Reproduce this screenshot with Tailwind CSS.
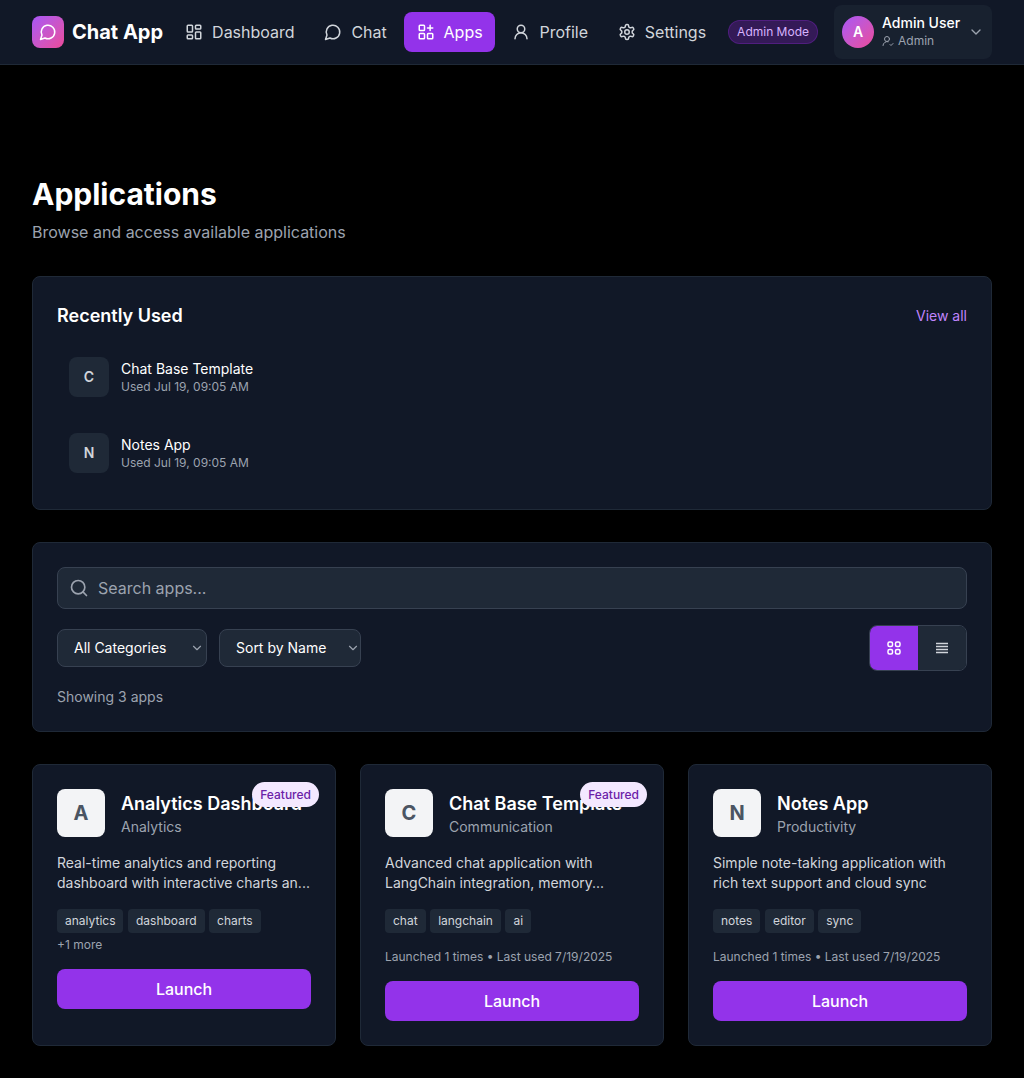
<!DOCTYPE html>
<html lang="en">
<head>
  <meta charset="UTF-8" />
  <title>Chat App - Applications</title>
  <script src="https://cdn.jsdelivr.net/npm/@tailwindcss/browser@4"></script>
</head>
<body class="bg-black min-h-screen font-['Inter',sans-serif] text-white">
  <!-- Top nav -->
  <nav class="h-[65px] bg-[#111827] border-b border-[#1f2937] pl-8 pr-8 flex items-center justify-between">
    <div class="flex items-center">
      <div class="flex items-center gap-2 mr-[9px]">
        <div class="w-8 h-8 rounded-lg bg-gradient-to-br from-[#a855f7] to-[#ec4899] flex items-center justify-center">
          <svg class="w-[18px] h-[18px]" viewBox="0 0 24 24" fill="none" stroke="currentColor" stroke-width="2" stroke-linecap="round" stroke-linejoin="round"><path d="M7.9 20A9 9 0 1 0 4 16.1L2 22Z"/></svg>
        </div>
        <span class="text-xl font-bold">Chat App</span>
      </div>
      <div class="flex items-center gap-[4.8px]">
        <a class="h-10 pl-[13px] pr-3 flex items-center gap-[9px] rounded-lg text-[#d1d5db]">
          <svg class="w-[18px] h-[18px]" viewBox="0 0 24 24" fill="none" stroke="currentColor" stroke-width="2" stroke-linecap="round" stroke-linejoin="round"><rect x="3" y="3" width="7" height="9" rx="1"/><rect x="14" y="3" width="7" height="5" rx="1"/><rect x="14" y="12" width="7" height="9" rx="1"/><rect x="3" y="16" width="7" height="5" rx="1"/></svg>
          Dashboard
        </a>
        <a class="h-10 pl-[13px] pr-3 flex items-center gap-[9px] rounded-lg text-[#d1d5db]">
          <svg class="w-[18px] h-[18px]" viewBox="0 0 24 24" fill="none" stroke="currentColor" stroke-width="2" stroke-linecap="round" stroke-linejoin="round"><path d="M7.9 20A9 9 0 1 0 4 16.1L2 22Z"/></svg>
          Chat
        </a>
        <a class="h-10 pl-[13px] pr-3 flex items-center gap-[9px] rounded-lg bg-[#9333ea] text-white">
          <svg class="w-[18px] h-[18px]" viewBox="0 0 24 24" fill="none" stroke="currentColor" stroke-width="2" stroke-linecap="round" stroke-linejoin="round"><rect x="3" y="3" width="7" height="7" rx="1"/><rect x="3" y="14" width="7" height="7" rx="1"/><rect x="14" y="14" width="7" height="7" rx="1"/><path d="M14 6.5h7M17.5 3v7"/></svg>
          Apps
        </a>
        <a class="h-10 pl-[13px] pr-3 flex items-center gap-[9px] rounded-lg text-[#d1d5db]">
          <svg class="w-[18px] h-[18px]" viewBox="0 0 24 24" fill="none" stroke="currentColor" stroke-width="2" stroke-linecap="round" stroke-linejoin="round"><circle cx="12" cy="8" r="5"/><path d="M20 21a8 8 0 0 0-16 0"/></svg>
          Profile
        </a>
        <a class="h-10 pl-[13px] pr-3 flex items-center gap-[9px] rounded-lg text-[#d1d5db]">
          <svg class="w-[18px] h-[18px]" viewBox="0 0 24 24" fill="none" stroke="currentColor" stroke-width="2" stroke-linecap="round" stroke-linejoin="round"><path d="M12.22 2h-.44a2 2 0 0 0-2 2v.18a2 2 0 0 1-1 1.73l-.43.25a2 2 0 0 1-2 0l-.15-.08a2 2 0 0 0-2.73.73l-.22.38a2 2 0 0 0 .73 2.73l.15.1a2 2 0 0 1 1 1.72v.51a2 2 0 0 1-1 1.74l-.15.09a2 2 0 0 0-.73 2.73l.22.38a2 2 0 0 0 2.73.73l.15-.08a2 2 0 0 1 2 0l.43.25a2 2 0 0 1 1 1.73V20a2 2 0 0 0 2 2h.44a2 2 0 0 0 2-2v-.18a2 2 0 0 1 1-1.73l.43-.25a2 2 0 0 1 2 0l.15.08a2 2 0 0 0 2.73-.73l.22-.39a2 2 0 0 0-.73-2.73l-.15-.08a2 2 0 0 1-1-1.74v-.5a2 2 0 0 1 1-1.74l.15-.09a2 2 0 0 0 .73-2.73l-.22-.38a2 2 0 0 0-2.73-.73l-.15.08a2 2 0 0 1-2 0l-.43-.25a2 2 0 0 1-1-1.73V4a2 2 0 0 0-2-2z"/><circle cx="12" cy="12" r="3"/></svg>
          Settings
        </a>
      </div>
    </div>
    <div class="flex items-center gap-4">
      <span class="h-6 px-2 flex items-center rounded-full border border-[#6b21a8]/50 bg-[#581c87]/50 text-[#d8b4fe] text-xs">Admin Mode</span>
      <div class="w-[158px] h-[54px] rounded-lg bg-[#1f2937]/50 pl-2 pr-2 flex items-center gap-2">
        <div class="w-8 h-8 shrink-0 rounded-full bg-gradient-to-br from-[#a855f7] to-[#ec4899] flex items-center justify-center text-sm font-semibold">A</div>
        <div class="flex-1 min-w-0 whitespace-nowrap pb-0.5">
          <div class="text-sm font-medium leading-5">Admin User</div>
          <div class="flex items-center gap-1 text-xs leading-4 text-[#9ca3af]">
            <svg class="w-3 h-3" viewBox="0 0 24 24" fill="none" stroke="currentColor" stroke-width="2" stroke-linecap="round" stroke-linejoin="round"><circle cx="10" cy="8" r="5"/><path d="M2 21a8 8 0 0 1 10.4-7.6"/><path d="m16 19 2 2 4-4"/></svg>
            Admin
          </div>
        </div>
        <svg class="w-4 h-4 shrink-0 text-[#9ca3af]" viewBox="0 0 24 24" fill="none" stroke="currentColor" stroke-width="2" stroke-linecap="round" stroke-linejoin="round"><path d="m6 9 6 6 6-6"/></svg>
      </div>
    </div>
  </nav>

  <main class="px-8 pt-[111px]">
    <h1 class="text-3xl font-bold leading-9">Applications</h1>
    <p class="mt-2 text-[#9ca3af] leading-6 mb-8">Browse and access available applications</p>

    <!-- Recently used -->
    <section class="bg-[#111827] border border-[#1f2937] rounded-lg p-6 mb-8">
      <div class="flex items-center justify-between mb-4">
        <h2 class="text-lg font-semibold pt-0.5 leading-[26px]">Recently Used</h2>
        <a class="text-sm pt-0.5 text-[#c084fc]">View all</a>
      </div>
      <div class="flex flex-col gap-3">
        <div class="flex items-center gap-3 p-3 rounded-lg">
          <div class="w-10 h-10 rounded-lg bg-[#1f2937] text-[#d1d5db] flex items-center justify-center text-sm font-semibold">C</div>
          <div>
            <div class="text-sm leading-5">Chat Base Template</div>
            <div class="text-xs leading-4 text-[#9ca3af]">Used Jul 19, 09:05 AM</div>
          </div>
        </div>
        <div class="flex items-center gap-3 p-3 rounded-lg">
          <div class="w-10 h-10 rounded-lg bg-[#1f2937] text-[#d1d5db] flex items-center justify-center text-sm font-semibold">N</div>
          <div>
            <div class="text-sm leading-5">Notes App</div>
            <div class="text-xs leading-4 text-[#9ca3af]">Used Jul 19, 09:05 AM</div>
          </div>
        </div>
      </div>
    </section>

    <!-- Search and filters -->
    <section class="bg-[#111827] border border-[#1f2937] rounded-lg p-6 mb-8">
      <div class="relative mb-4">
        <svg class="absolute left-3 top-[11px] w-5 h-5 text-[#9ca3af]" viewBox="0 0 24 24" fill="none" stroke="currentColor" stroke-width="2" stroke-linecap="round" stroke-linejoin="round"><circle cx="11" cy="11" r="8"/><path d="m21 21-4.3-4.3"/></svg>
        <input type="text" placeholder="Search apps..." class="w-full h-[42px] pl-10 pr-4 rounded-lg bg-[#1f2937] border border-[#374151] text-white placeholder:text-[#9ca3af]" />
      </div>
      <div class="flex items-center justify-between mb-4">
        <div class="flex items-center gap-3">
          <div class="relative">
            <select class="appearance-none block h-[38px] w-[150px] pl-4 rounded-lg bg-[#1f2937] border border-[#374151] text-sm text-white"><option>All Categories</option></select>
            <svg class="absolute right-[3px] top-[12px] w-3.5 h-3.5 text-[#9ca3af]" viewBox="0 0 24 24" fill="none" stroke="currentColor" stroke-width="2" stroke-linecap="round" stroke-linejoin="round"><path d="m6 9 6 6 6-6"/></svg>
          </div>
          <div class="relative">
            <select class="appearance-none block h-[38px] w-[142px] pl-4 rounded-lg bg-[#1f2937] border border-[#374151] text-sm text-white"><option>Sort by Name</option></select>
            <svg class="absolute right-[1px] top-[12px] w-3.5 h-3.5 text-[#9ca3af]" viewBox="0 0 24 24" fill="none" stroke="currentColor" stroke-width="2" stroke-linecap="round" stroke-linejoin="round"><path d="m6 9 6 6 6-6"/></svg>
          </div>
        </div>
        <div class="flex rounded-lg border border-[#374151] overflow-hidden h-[46px]">
          <button class="w-12 bg-[#9333ea] text-white flex items-center justify-center">
            <svg class="w-4 h-4" viewBox="0 0 16 16" fill="none" stroke="currentColor" stroke-width="1.5"><rect x="2" y="2" width="4.5" height="4.5" rx="1.5"/><rect x="9.5" y="2" width="4.5" height="4.5" rx="1.5"/><rect x="2" y="9.5" width="4.5" height="4.5" rx="1.5"/><rect x="9.5" y="9.5" width="4.5" height="4.5" rx="1.5"/></svg>
          </button>
          <button class="w-12 bg-[#1f2937] text-[#d1d5db] flex items-center justify-center">
            <svg class="w-4 h-4" viewBox="0 0 16 16" fill="none" stroke="currentColor" stroke-width="1.5"><path d="M2 3.5h12M2 6.5h12M2 9.5h12M2 12.5h12"/></svg>
          </button>
        </div>
      </div>
      <p class="text-sm leading-5 text-[#9ca3af]">Showing 3 apps</p>
    </section>

    <!-- App cards -->
    <section class="grid grid-cols-3 gap-6">
      <article class="relative bg-[#111827] border border-[#1f2937] rounded-lg p-6 h-[282px]">
        <span class="absolute right-4 top-[17px] h-[25px] px-2 flex items-center rounded-full bg-[#f3e8ff] text-[#6b21a8] text-xs font-medium">Featured</span>
        <div class="flex items-center gap-4 mb-4">
          <div class="w-12 h-12 rounded-lg bg-[#f3f4f6] text-[#4b5563] flex items-center justify-center text-xl font-bold">A</div>
          <div>
            <h3 class="text-lg font-semibold pt-0.5 leading-[26px] whitespace-nowrap">Analytics Dashboard</h3>
            <p class="text-sm leading-5 text-[#9ca3af]">Analytics</p>
          </div>
        </div>
        <p class="text-sm leading-5 text-[#d1d5db] mb-4">Real-time analytics and reporting dashboard with interactive charts an...</p>
        <div class="flex flex-wrap gap-[4.5px]">
          <span class="px-2 py-1 rounded bg-[#1f2937] text-xs text-[#d1d5db]">analytics</span>
          <span class="px-2 py-1 rounded bg-[#1f2937] text-xs text-[#d1d5db]">dashboard</span>
          <span class="px-2 py-1 rounded bg-[#1f2937] text-xs text-[#d1d5db]">charts</span>
        </div>
        <p class="text-xs leading-6 text-[#9ca3af] mb-3">+1 more</p>
        <button class="w-full h-10 rounded-lg bg-[#9333ea] font-medium">Launch</button>
      </article>

      <article class="relative bg-[#111827] border border-[#1f2937] rounded-lg p-6 h-[282px]">
        <span class="absolute right-4 top-[17px] h-[25px] px-2 flex items-center rounded-full bg-[#f3e8ff] text-[#6b21a8] text-xs font-medium">Featured</span>
        <div class="flex items-center gap-4 mb-4">
          <div class="w-12 h-12 rounded-lg bg-[#f3f4f6] text-[#4b5563] flex items-center justify-center text-xl font-bold">C</div>
          <div>
            <h3 class="text-lg font-semibold pt-0.5 leading-[26px] whitespace-nowrap">Chat Base Template</h3>
            <p class="text-sm leading-5 text-[#9ca3af]">Communication</p>
          </div>
        </div>
        <p class="text-sm leading-5 text-[#d1d5db] mb-4">Advanced chat application with LangChain integration, memory...</p>
        <div class="flex flex-wrap gap-[4.5px] mb-4">
          <span class="px-2 py-1 rounded bg-[#1f2937] text-xs text-[#d1d5db]">chat</span>
          <span class="px-2 py-1 rounded bg-[#1f2937] text-xs text-[#d1d5db]">langchain</span>
          <span class="px-2 py-1 rounded bg-[#1f2937] text-xs text-[#d1d5db]">ai</span>
        </div>
        <p class="text-xs leading-4 text-[#9ca3af] mb-4">Launched 1 times • Last used 7/19/2025</p>
        <button class="w-full h-10 rounded-lg bg-[#9333ea] font-medium">Launch</button>
      </article>

      <article class="relative bg-[#111827] border border-[#1f2937] rounded-lg p-6 h-[282px]">
        <div class="flex items-center gap-4 mb-4">
          <div class="w-12 h-12 rounded-lg bg-[#f3f4f6] text-[#4b5563] flex items-center justify-center text-xl font-bold">N</div>
          <div>
            <h3 class="text-lg font-semibold pt-0.5 leading-[26px] whitespace-nowrap">Notes App</h3>
            <p class="text-sm leading-5 text-[#9ca3af]">Productivity</p>
          </div>
        </div>
        <p class="text-sm leading-5 text-[#d1d5db] mb-4">Simple note-taking application with rich text support and cloud sync</p>
        <div class="flex flex-wrap gap-[4.5px] mb-4">
          <span class="px-2 py-1 rounded bg-[#1f2937] text-xs text-[#d1d5db]">notes</span>
          <span class="px-2 py-1 rounded bg-[#1f2937] text-xs text-[#d1d5db]">editor</span>
          <span class="px-2 py-1 rounded bg-[#1f2937] text-xs text-[#d1d5db]">sync</span>
        </div>
        <p class="text-xs leading-4 text-[#9ca3af] mb-4">Launched 1 times • Last used 7/19/2025</p>
        <button class="w-full h-10 rounded-lg bg-[#9333ea] font-medium">Launch</button>
      </article>
    </section>
  </main>
</body>
</html>
